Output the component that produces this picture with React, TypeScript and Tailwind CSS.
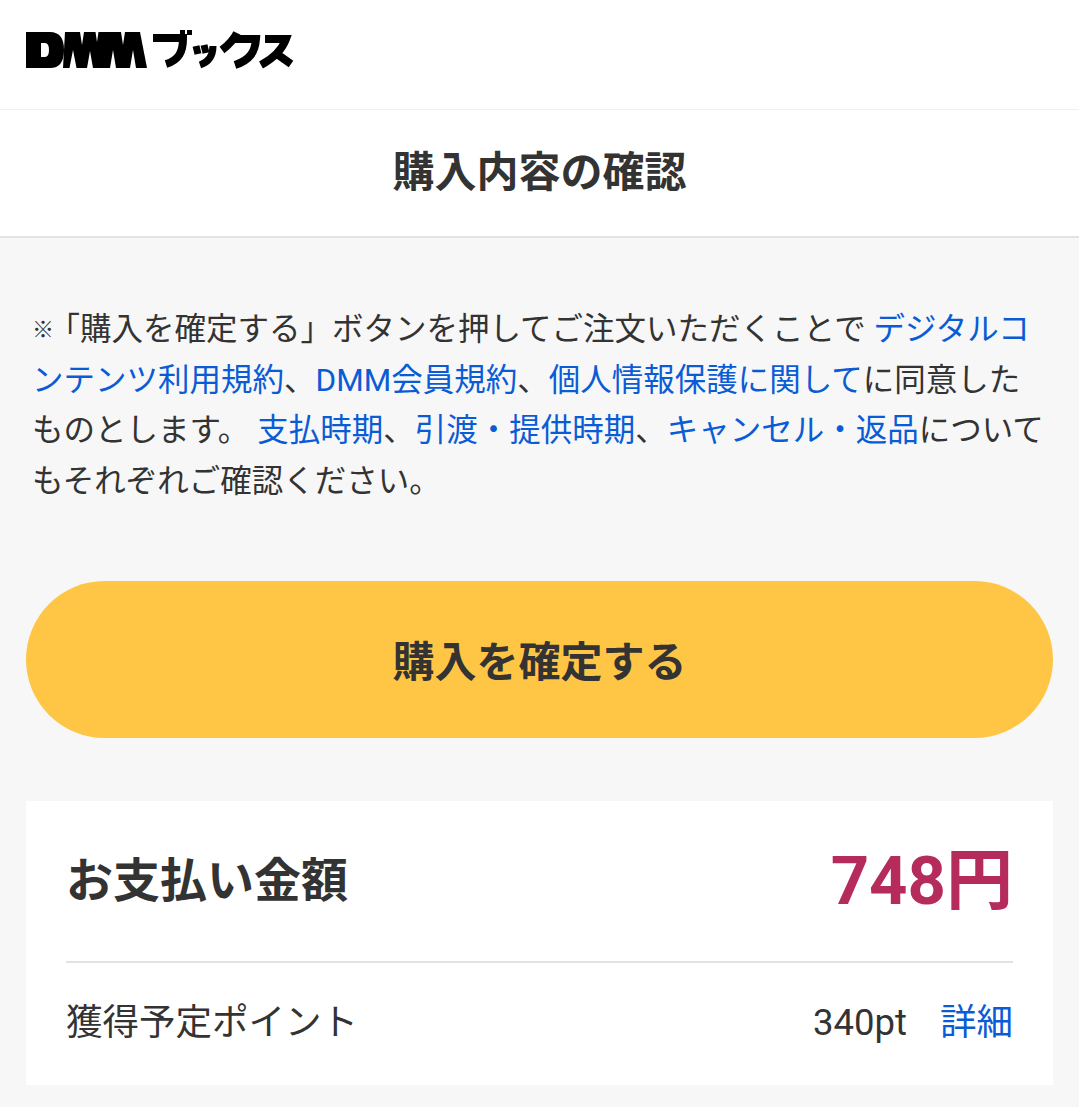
const font = { fontFamily: 'Roboto, "Noto Sans CJK JP", sans-serif' };
function Logo() {
  return (
    <svg width="270" height="44" viewBox="26 28 270 44" className="block">
      <path fill="#000" fillRule="evenodd" d="M26 32H50Q64 32 64 50Q64 68 50 68H26ZM41 43V57H45Q49 57 49 50Q49 43 45 43Z" />
      <path fill="#000" d="M65 32H140L147 68H63Z" />
      <path fill="#fff" d="M80 32H84L82 45ZM95.5 32H98.5L97 42ZM121 32H125L123 45ZM69.5 68L73 50L76.5 68ZM87 68L90 51L93 68ZM110 68L113 50L116 68ZM130 68L133 50L136 68Z" />
      <g fill="none" stroke="#000" strokeWidth="8" strokeLinejoin="miter">
        <path d="M153 38H183C183 52 179 60 166 64" />
        <path d="M196 46L198 54M204 45L206 53" strokeWidth="7" />
        <path d="M213 46C213 56 209 62 200 65" strokeWidth="7" />
        <path d="M237 33C234 39 230 44 222 50M232 39H256C255 52 250 60 235 65" />
        <path d="M265 39H286C282 50 274 58 261 65M274 52L291 64" />
      </g>
      <path fill="#000" d="M180 30h5v5h-5zM187 30h5v5h-5z" />
    </svg>
  );
}
const link = "text-[#0a5cd6]";
export default function App() {
  return (
    <div className="w-[1079px] h-[1107px] overflow-hidden bg-[#f7f7f7] text-[#333]" style={font}>
      <header className="h-[110px] bg-white flex items-start pl-[26px] pt-[28px] border-b border-[#f0f0f0]">
        <Logo />
      </header>
      <div className="h-[128px] bg-white border-b-2 border-[#e2e2e2] flex items-center justify-center">
        <h1 className="text-[42px] font-bold leading-none">購入内容の確認</h1>
      </div>
      <p className="mx-[32px] mt-[67px] text-[31.5px] leading-[50.5px] h-[201px]">
        <span className="text-[22px] leading-none tracking-[-5.5px] align-[3px]">※</span>「購入を確定する」ボタンを押してご注文いただくことで <span className={link}>デジタルコンテンツ利用規約</span>、<span className={link}>DMM会員規約</span>、<span className={link}>個人情報保護に関して</span>に同意したものとします。 <span className={link}>支払時期</span>、<span className={link}>引渡・提供時期</span>、<span className={link}>キャンセル・返品</span>についてもそれぞれご確認ください。
      </p>
      <button className="mx-[26px] mt-[75px] w-[1027px] h-[157px] rounded-full bg-[#ffc646] text-[42px] font-bold block pt-[5px]">購入を確定する</button>
      <section className="mx-[26px] mt-[63px] bg-white h-[284px] px-[40px]">
        <div className="h-[162px] border-b-2 border-[#e2e2e2] flex items-center justify-between">
          <span className="text-[47px] font-bold">お支払い金額</span>
          <span className="text-[67px] font-bold text-[#b52c5c]">748円</span>
        </div>
        <div className="h-[120px] pt-[1px] flex items-center justify-between text-[36.5px]">
          <span>獲得予定ポイント</span>
          <span className="flex items-center gap-[33px]"><span>340pt</span><span className={link}>詳細</span></span>
        </div>
      </section>
    </div>
  );
}
